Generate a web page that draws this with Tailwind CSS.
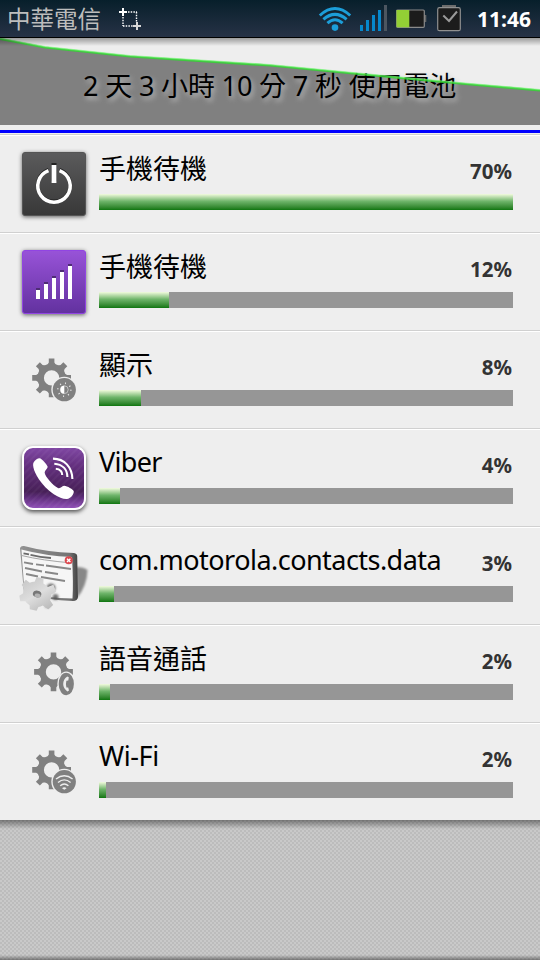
<!DOCTYPE html>
<html lang="zh-Hant">

<head>
  <meta charset="UTF-8" />
  <title>電池使用狀況</title>
  <script src="https://cdn.jsdelivr.net/npm/@tailwindcss/browser@4"></script>
</head>

<body class="w-[540px] h-[960px] overflow-hidden bg-[#c3c3c3] text-black font-['Noto_Sans','Noto_Sans_CJK_TC',sans-serif]">

  <!-- Shared shapes -->
  <svg class="absolute w-0 h-0">
    <defs>
      <g id="gear">
        <path id="tooth" d="M-4.4 -13 L-2.8 -15.5 V-19.4 H2.8 V-15.5 L4.4 -13 V-9 H-4.4 Z" />
        <use href="#tooth" transform="rotate(45)" />
        <use href="#tooth" transform="rotate(90)" />
        <use href="#tooth" transform="rotate(135)" />
        <use href="#tooth" transform="rotate(180)" />
        <use href="#tooth" transform="rotate(225)" />
        <use href="#tooth" transform="rotate(270)" />
        <use href="#tooth" transform="rotate(315)" />
        <path fill-rule="evenodd" d="M0 -14.2 A14.2 14.2 0 1 1 0 14.2 A14.2 14.2 0 1 1 0 -14.2 Z M0 -7.7 A7.7 7.7 0 1 0 0 7.7 A7.7 7.7 0 1 0 0 -7.7 Z" />
      </g>
    </defs>
  </svg>

  <div class="flex flex-col h-[960px]">

    <!-- Status bar -->
    <header class="h-[38px] shrink-0 flex items-center bg-linear-to-b from-[#071f2b] to-[#263246] border-b border-black pl-[7px] pr-[9px]">
      <span class="pt-px text-[23.5px] leading-[37px] text-[#bdbdbd] whitespace-nowrap">中華電信</span>
      <svg class="ml-[17px] w-6 h-6" viewBox="0 0 24 24" fill="none" stroke="#fff">
        <path d="M5 1 V9 M1 5 H9" stroke-width="2" />
        <path d="M19 15 V23 M15 19 H23" stroke-width="2" stroke="#d8d8d8" />
        <path d="M10 5 H19" stroke-width="1.4" stroke-dasharray="1.5 1.2" />
        <path d="M18.5 5 V15" stroke-width="1.4" stroke-dasharray="1.5 1.2" />
        <path d="M5 10 V19" stroke-width="1.4" stroke-dasharray="1.5 1.2" />
        <path d="M5 19 H15" stroke-width="1.4" stroke-dasharray="1.5 1.2" />
      </svg>
      <div class="ml-auto flex items-center">
        <svg class="w-[34px] h-[28px]" viewBox="0 0 34 28" fill="none" stroke="#1c9ed9" stroke-width="3">
          <path d="M1.8 10.5 Q17 -3.4 32.2 10.5" />
          <path d="M5.4 14.4 Q17 4.4 28.6 14.4" />
          <path d="M9.4 18.2 Q17 11.2 24.6 18.2" />
          <circle cx="17" cy="22.6" r="3.3" fill="#1c9ed9" stroke="none" />
        </svg>
        <svg class="ml-[7px] w-[28px] h-[28px]" viewBox="0 0 28 28" fill="#0688cd">
          <path d="M1 20 h3 v6 h-3 z M7 15 h3 v11 h-3 z M13 10 h3 v16 h-3 z M19 5 h3 v21 h-3 z" />
          <path d="M25 0 h3 v26 h-3 z" fill="#4c5660" />
        </svg>
        <svg class="ml-[9px] w-[31px] h-[20px]" viewBox="0 0 31 20">
          <path d="M28 6 H30.3 V13 H28 Z" fill="#666" />
          <rect x="0.7" y="1" width="27.6" height="17.3" rx="1" fill="#1b1b1b" stroke="#8a8a8a" stroke-width="1.2" />
          <rect x="0.5" y="1" width="12.8" height="17.3" fill="#93cf35" />
        </svg>
        <svg class="ml-[10px] w-[24px] h-[28px]" viewBox="0 0 24 28">
          <rect x="5" y="0" width="14" height="3" fill="#6d6d6d" />
          <rect x="0.7" y="2.7" width="22.6" height="23" rx="1.8" fill="#1c1c1c" stroke="#909090" stroke-width="1.2" />
          <path d="M6.3 10.5 L12 16 L20 6.5" fill="none" stroke="#9a9a9a" stroke-width="2" />
        </svg>
        <span class="ml-[16px] w-[54px] pt-px text-[21px] leading-[37px] font-bold text-white whitespace-nowrap">11:46</span>
      </div>
    </header>

    <!-- Battery history chart -->
    <section class="relative h-[92px] shrink-0 bg-[#eee]">
      <svg class="absolute inset-0 w-[540px] h-[87px]" viewBox="0 0 540 87">
        <path d="M0 1 L45 9.5 L130 18.5 L270 27.5 L400 40 L465 46 L540 52.5 V87 H0 Z" fill="#808080" />
      </svg>
      <h1 class="absolute left-[83px] top-[28px] text-[27px] leading-[40px] whitespace-pre tracking-[-0.15px] [text-shadow:2px_3px_5px_#bbb]">2 天 3 小時 10 分 7 秒 使用電池</h1>
      <svg class="absolute inset-0 w-[540px] h-[87px]" viewBox="0 0 540 87" fill="none">
        <path d="M0 1 L45 9.5 L130 18.5 L270 27.5 L400 40 L465 46 L540 52.5" stroke="#33d633" stroke-opacity="0.85" stroke-width="2.2" />
        <path d="M0 0 L45 8.5 L130 17.5 L270 26.5 L400 39 L465 45 L540 51.5" stroke="#7dfa7d" stroke-opacity="0.6" stroke-width="1" />
      </svg>
      <div class="absolute inset-x-0 top-0 h-[8px] bg-linear-to-b from-black/35 to-transparent"></div>
    </section>
    <div class="h-[3px] shrink-0 bg-[#0000ff]"></div>
    <div class="h-px shrink-0 bg-[#eee]"></div>

    <!-- Usage list -->
    <main class="shrink-0">
      <div class="h-[98px] flex bg-[#eee] border-t border-[#d0d0d0] pl-[22px] pr-[27px] shadow-[inset_0_1px_0_#fff]">
        <svg class="mt-[17px] w-16 h-16 shrink-0 overflow-visible drop-shadow-[0_1px_2px_#0009]" viewBox="0 0 64 64">
          <defs>
            <linearGradient id="dark" x2="0" y2="1">
              <stop stop-color="#5b5b5c" />
              <stop offset="1" stop-color="#383838" />
            </linearGradient>
          </defs>
          <rect x="0.5" y="0.5" width="63" height="63" rx="2.5" fill="url(#dark)" stroke="#555" />
          <g fill="none" stroke="#222">
            <path d="M26.5 17.7 A16.3 16.3 0 1 0 37.5 17.7" stroke-width="3.6" />
            <path d="M32 11 V29" stroke-width="5" />
          </g>
          <g fill="none" stroke="#fff">
            <path d="M26.5 18.7 A16.2 16.2 0 1 0 37.5 18.7" stroke-width="3.5" />
            <path d="M32 13 V31" stroke-width="4.8" />
          </g>
        </svg>
        <div class="ml-[13px] flex-1">
          <div class="h-[59px] flex justify-between">
            <span class="pt-[14px] text-[27px] leading-[40px]">手機待機</span>
            <span class="pt-[21px] pr-px text-[20.5px] leading-[30px] font-bold text-[#333]">70%</span>
          </div>
          <div class="h-4 bg-[#969696]">
            <div class="h-4 bg-linear-to-b from-[#f2fbdf] via-[#6fb56b] via-45% to-[#0b760d]" style="width: 414px"></div>
          </div>
        </div>
      </div>

      <div class="h-[98px] flex bg-[#eee] border-t border-[#d0d0d0] pl-[22px] pr-[27px] shadow-[inset_0_1px_0_#fff]">
        <svg class="mt-[17px] w-16 h-16 shrink-0 overflow-visible drop-shadow-[0_1px_2px_#0009]" viewBox="0 0 64 64">
          <defs>
            <linearGradient id="violet" x2="0" y2="1">
              <stop stop-color="#9853d8" />
              <stop offset="1" stop-color="#62319f" />
            </linearGradient>
          </defs>
          <rect x="0.5" y="0.5" width="63" height="63" rx="2.5" fill="url(#violet)" stroke="#9145e2" />
          <path d="M14 38 h4 v3 h-4 z M22 32 h4 v3 h-4 z M30 26 h4 v3 h-4 z M38 20 h4 v3 h-4 z M46 14 h4 v3 h-4 z" fill="#4e2d75" />
          <path d="M14 40 h4 v9 h-4 z M22 34 h4 v15 h-4 z M30 28 h4 v21 h-4 z M38 22 h4 v27 h-4 z M46 16 h4 v33 h-4 z" fill="#fff" />
        </svg>
        <div class="ml-[13px] flex-1">
          <div class="h-[59px] flex justify-between">
            <span class="pt-[14px] text-[27px] leading-[40px]">手機待機</span>
            <span class="pt-[21px] pr-px text-[20.5px] leading-[30px] font-bold text-[#333]">12%</span>
          </div>
          <div class="h-4 bg-[#969696]">
            <div class="h-4 bg-linear-to-b from-[#f2fbdf] via-[#6fb56b] via-45% to-[#0b760d]" style="width: 70px"></div>
          </div>
        </div>
      </div>

      <div class="h-[98px] flex bg-[#eee] border-t border-[#d0d0d0] pl-[22px] pr-[27px] shadow-[inset_0_1px_0_#fff]">
        <svg class="mt-[17px] w-16 h-16 shrink-0" viewBox="0 0 64 64" fill="#808080">
          <use href="#gear" x="29.6" y="29.9" />
          <circle cx="42.3" cy="41.7" r="13" fill="#eee" />
          <circle cx="42.3" cy="41.7" r="11.6" />
          <circle cx="42.3" cy="41.7" r="6.5" fill="none" stroke="#eee" stroke-width="1.6" stroke-dasharray="0.9 4.2" />
          <circle cx="42.3" cy="41.7" r="3.9" fill="none" stroke="#ddd" stroke-width="0.7" />
          <path d="M42.3 37.8 A3.9 3.9 0 0 0 42.3 45.6 Z" fill="#fff" />
        </svg>
        <div class="ml-[13px] flex-1">
          <div class="h-[59px] flex justify-between">
            <span class="pt-[14px] text-[27px] leading-[40px]">顯示</span>
            <span class="pt-[21px] pr-px text-[20.5px] leading-[30px] font-bold text-[#333]">8%</span>
          </div>
          <div class="h-4 bg-[#969696]">
            <div class="h-4 bg-linear-to-b from-[#f2fbdf] via-[#6fb56b] via-45% to-[#0b760d]" style="width: 42px"></div>
          </div>
        </div>
      </div>

      <div class="h-[98px] flex bg-[#eee] border-t border-[#d0d0d0] pl-[22px] pr-[27px] shadow-[inset_0_1px_0_#fff]">
        <svg class="mt-[17px] w-16 h-16 shrink-0 overflow-visible drop-shadow-[0_2px_2px_#000a]" viewBox="0 0 64 64">
          <defs>
            <linearGradient id="plum" x2="0" y2="1">
              <stop stop-color="#8148a5" />
              <stop offset="0.3" stop-color="#64307f" />
              <stop offset="0.72" stop-color="#472057" />
              <stop offset="0.8" stop-color="#5a2b75" />
              <stop offset="1" stop-color="#9554bd" />
            </linearGradient>
            <pattern id="stripes" width="5" height="5" patternUnits="userSpaceOnUse" patternTransform="rotate(45)">
              <rect width="2" height="5" fill="#fff" fill-opacity="0.04" />
            </pattern>
          </defs>
          <rect x="1" y="1" width="62" height="62" rx="10" fill="url(#plum)" stroke="#fff" stroke-width="2" />
          <rect x="2" y="2" width="60" height="60" rx="9" fill="url(#stripes)" />
          <path d="M11.3 17 C13 13.8 16 12 18.4 12.4 C20 12.8 25 18.5 25.6 20.5 C26 22.5 22.5 24.5 22.7 27 C23.5 31 31 39.5 36 42 C38.5 43 40 39.8 42.4 39.8 C45 40 51.4 43.5 51.8 45.4 C52 48 48.5 52.6 45 53 C38 53.5 27 46 21 38.5 C15 31.5 10 22 11.3 17 Z" fill="#fff" />
          <g fill="none" stroke="#fff" stroke-width="2.1">
            <path d="M31 12.6 C42.5 12.8 50 21 50.4 33" />
            <path d="M32.3 17.7 C40.5 18.3 45.3 23.5 45.4 31" />
            <path d="M33.8 22.8 C38.4 23.2 40.5 26 40.2 29" />
          </g>
        </svg>
        <div class="ml-[13px] flex-1">
          <div class="h-[59px] flex justify-between">
            <span class="pt-[13px] text-[27px] leading-[40px] tracking-[-0.7px]">Viber</span>
            <span class="pt-[21px] pr-px text-[20.5px] leading-[30px] font-bold text-[#333]">4%</span>
          </div>
          <div class="h-4 bg-[#969696]">
            <div class="h-4 bg-linear-to-b from-[#f2fbdf] via-[#6fb56b] via-45% to-[#0b760d]" style="width: 21px"></div>
          </div>
        </div>
      </div>

      <div class="h-[98px] flex bg-[#eee] border-t border-[#d0d0d0] pl-[22px] pr-[27px] shadow-[inset_0_1px_0_#fff]">
        <svg class="mt-[17px] w-16 h-16 shrink-0 overflow-visible" viewBox="0 0 64 64">
          <defs>
            <linearGradient id="edge">
              <stop stop-color="#929292" />
              <stop offset="0.85" stop-color="#747474" />
              <stop offset="1" stop-color="#414141" />
            </linearGradient>
            <linearGradient id="silver" x2="1" y2="1">
              <stop stop-color="#c2c2c2" />
              <stop offset="0.5" stop-color="#dedede" />
              <stop offset="1" stop-color="#b0b0b0" />
            </linearGradient>
            <filter id="soft" x="-30%" y="-30%" width="160%" height="160%">
              <feGaussianBlur stdDeviation="1.2" />
            </filter>
          </defs>
          <path d="M54 23 Q62 23 65.5 26 Q65 42 55 54 Z" fill="#888" filter="url(#soft)" />
          <path d="M-2 4 Q-1 1.5 2 2 Q24 8 52 9 Q55 9.5 55.2 12 L56 53 Q55.5 57 51 57 Q25 56 2 49 Z" fill="url(#edge)" />
          <path d="M-0.6 5.5 Q24 12 50 13 Q51.5 40 50.5 54.5 Q24 54.5 2.5 47 Z" fill="#f6f6f6" />
          <path d="M-0.4 11.5 Q20 16.5 50.6 19" fill="none" stroke="#a5a5a5" stroke-width="1" />
          <g fill="none" stroke="#6b6b6b" stroke-width="1.8">
            <path d="M1.5 9.3 L7 10.4 M8.5 10.8 Q18 13 29 14" />
            <path d="M2 18.3 L11 20 M14 20.4 L22 21.3 M24 21.5 L49 25" stroke="#888" />
            <path d="M3 24 L20 27.5 M23 28 L36 30" stroke="#888" />
            <path d="M4 30 L16 32.5 M19 33 L43 37" stroke="#888" />
          </g>
          <circle cx="46.7" cy="16.3" r="4" fill="#dc4a50" />
          <path d="M45 14.7 L48.4 18 M48.4 14.7 L45 18" stroke="#fff" stroke-width="1.4" />
          <g fill="#4a4a4a" fill-opacity="0.75" filter="url(#soft)">
            <circle cx="29" cy="44" r="4.5" />
            <circle cx="33.5" cy="53" r="3" />
            <circle cx="25.5" cy="61" r="2.6" />
          </g>
          <g transform="translate(15 50.5) rotate(12)">
            <path fill="url(#silver)" fill-rule="evenodd" d="M-4 -17 L3 -17 L4 -12 Q7 -11 9 -9.5 L14 -13 L18 -7 L14 -3 Q15 0 14 3 L18 7 L14 12 L8 9.5 Q6 11 4 12 L3 16 L-4 16 L-5 12 Q-8 11 -10 9 L-15 10 L-17 5 L-14 2 Q-14 -1 -13.5 -3 L-17 -6 L-14 -12 L-9.5 -10 Q-7 -12 -5 -12 Z" />
            <ellipse cx="0" cy="-0.5" rx="4.3" ry="3.4" fill="#777" />
            <ellipse cx="0.8" cy="0.9" rx="3" ry="2" fill="#b2b2b2" />
          </g>
        </svg>
        <div class="ml-[13px] flex-1">
          <div class="h-[59px] flex justify-between">
            <span class="pt-[13px] text-[27px] leading-[40px] tracking-[-0.54px]">com.motorola.contacts.data</span>
            <span class="pt-[21px] pr-px text-[20.5px] leading-[30px] font-bold text-[#333]">3%</span>
          </div>
          <div class="h-4 bg-[#969696]">
            <div class="h-4 bg-linear-to-b from-[#f2fbdf] via-[#6fb56b] via-45% to-[#0b760d]" style="width: 15px"></div>
          </div>
        </div>
      </div>

      <div class="h-[98px] flex bg-[#eee] border-t border-[#d0d0d0] pl-[22px] pr-[27px] shadow-[inset_0_1px_0_#fff]">
        <svg class="mt-[17px] w-16 h-16 shrink-0" viewBox="0 0 64 64" fill="#808080">
          <use href="#gear" x="31.5" y="29.9" />
          <ellipse cx="44.3" cy="42" rx="9" ry="12.6" fill="#eee" />
          <ellipse cx="44.3" cy="42" rx="7.6" ry="11.2" />
          <path d="M46.8 35.2 L45.2 34.6 Q41.2 37.5 41.2 42 Q41.2 46.5 45.4 49.4 L47 48.6 L46.2 45.6 L44.4 45.4 Q43.4 42 44.4 38.7 L46.3 38.4 Z" fill="#eee" />
        </svg>
        <div class="ml-[13px] flex-1">
          <div class="h-[59px] flex justify-between">
            <span class="pt-[14px] text-[27px] leading-[40px]">語音通話</span>
            <span class="pt-[21px] pr-px text-[20.5px] leading-[30px] font-bold text-[#333]">2%</span>
          </div>
          <div class="h-4 bg-[#969696]">
            <div class="h-4 bg-linear-to-b from-[#f2fbdf] via-[#6fb56b] via-45% to-[#0b760d]" style="width: 11px"></div>
          </div>
        </div>
      </div>

      <div class="h-[98px] flex bg-[#eee] border-t border-[#d0d0d0] pl-[22px] pr-[27px] shadow-[inset_0_1px_0_#fff]">
        <svg class="mt-[17px] w-16 h-16 shrink-0" viewBox="0 0 64 64" fill="#808080">
          <use href="#gear" x="29.6" y="29.9" />
          <circle cx="42.3" cy="41.7" r="13" fill="#eee" />
          <circle cx="42.3" cy="41.7" r="11.6" />
          <g fill="none" stroke="#eee" stroke-width="1.4">
            <path d="M34 39 Q42.3 32.5 50.6 39" />
            <path d="M36 42.5 Q42.3 37.3 48.6 42.5" />
            <path d="M38.2 45.8 Q42.3 42.3 46.4 45.8" />
          </g>
          <path d="M40 48.2 Q42.3 46.4 44.6 48.2 L42.3 49.8 Z" fill="#eee" />
        </svg>
        <div class="ml-[13px] flex-1">
          <div class="h-[59px] flex justify-between">
            <span class="pt-[13px] text-[27px] leading-[40px] tracking-[-0.4px]">Wi-Fi</span>
            <span class="pt-[21px] pr-px text-[20.5px] leading-[30px] font-bold text-[#333]">2%</span>
          </div>
          <div class="h-4 bg-[#969696]">
            <div class="h-4 bg-linear-to-b from-[#f2fbdf] via-[#6fb56b] via-45% to-[#0b760d]" style="width: 7px"></div>
          </div>
        </div>
      </div>
    </main>

    <!-- Empty area under the list -->
    <div class="flex-1 flex flex-col justify-between bg-[#c3c3c3] bg-[repeating-conic-gradient(#bcbcbc_0_25%,#c9c9c9_0_50%)] bg-size-[4px_4px]">
      <div class="h-[9px] bg-linear-to-b from-black/40 to-transparent"></div>
      <div class="h-[5px] bg-linear-to-t from-black/40 to-transparent"></div>
    </div>
  </div>

</body>
</html>
